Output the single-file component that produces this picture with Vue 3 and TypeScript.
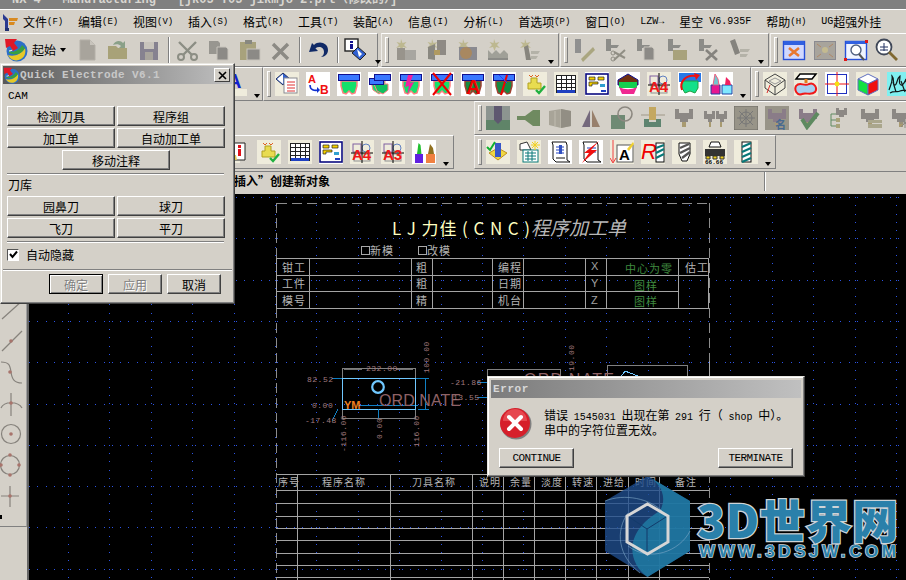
<template>
  <div class="app">
    <!-- 标题栏 -->
    <div class="titlebar">NX 4 - Manufacturing - [jk05 T05 jikmjo 2.prt（修改的）]</div>

    <!-- 菜单 -->
    <div class="menubar">
      <svg class="nx-logo" width="18" height="18" viewBox="0 0 18 18">
        <path d="M2 1l5 5v11H4V8L2 6z" fill="#2a3a90" />
        <path d="M8 5h9l-1 3H8zM8 9h6l-1 3H8z" fill="#d88a20" />
        <path d="M4 15h4v3H4z" fill="#203070" />
      </svg>
      <span v-for="m in menus" :key="m.label" class="menu-item"><i v-if="m.pre" class="menu-latin">{{ m.pre }}</i>{{ m.label }}<i v-if="m.key" class="menu-key">({{ m.key }})</i><i v-if="m.post" class="menu-latin">{{ m.post }}</i></span>
    </div>

    <!-- 工具条 -->
    <div v-for="(row, r) in rows" :key="r" class="tool-row">
      <div v-for="(group, g) in row" :key="g" class="tool-group" :class="group.cls">
        <template v-for="(item, i) in group.items" :key="i">
          <span v-if="item === 'grip'" class="grip"></span>
          <span v-else-if="item === 'sep'" class="sep"></span>
          <span v-else-if="item === 'more'" class="more"></span>
          <span v-else-if="item === 'startlabel'" class="start-label">起始<b class="start-caret"></b></span>
          <svg v-else class="tool-icon" :class="{ 'no-gap': item === 'start' }" width="24" height="24" viewBox="0 0 24 24" v-html="icons[item]"></svg>
        </template>
      </div>
    </div>

    <!-- 状态栏 -->
    <div class="statusbar">
      <div class="status-text">插入”创建新对象</div>
      <div class="status-right"></div>
    </div>

    <div class="work">
      <div class="palette">
        <div class="palette-icons">
          <svg v-for="(p, i) in paletteIcons" :key="i" width="26" height="31" viewBox="0 0 26 31" v-html="p"></svg>
          <span class="palette-mark"></span>
        </div>
      </div>

      <!-- 绘图区 -->
      <svg class="canvas" width="877" height="387" viewBox="29 193 877 387" shape-rendering="crispEdges">
        <path :d="gridDots" fill="#2c54e6" />

        <path class="frame" d="M277 202.5H710M276.5 202V580M709.5 202V580" />
        <path class="table" :d="topTable" />
        <path class="table" :d="bottomTable" />

        <g shape-rendering="auto">
          <text class="title-a" x="392" y="234" textLength="138">L J 力佳 ( C N C )</text>
          <text class="title-b" x="531" y="234">程序加工单</text>

          <text v-for="t in sheetTexts" :key="t.t + t.x + t.y" class="sheet" :class="t.c" :x="t.x" :y="t.y">{{ t.t }}</text>

          <rect x="361.5" y="245.5" width="8" height="8" fill="none" stroke="#a8a8a8" />
          <rect x="418.5" y="245.5" width="8" height="8" fill="none" stroke="#a8a8a8" />
        </g>

        <!-- 零件图 -->
        <path d="M342.5 367.5h73v50h-73z" fill="none" stroke="#808080" />
        <path d="M332 377.5h97M358 404.5h60" fill="none" stroke="#1080c4" />
        <path d="M342.5 377.5h73v31h-73zM342.5 408.5h73" fill="none" stroke="#70c8ff" />
        <path d="M378.5 408v9M418 408.5h11M425.5 378v30M338 408l-6 12" fill="none" stroke="#1080c4" />
        <path d="M344 368.5h18M396 368.5h17" stroke="#707070" fill="none" />
        <path d="M487.5 377v-9h73v9M607.5 377v-13h80v13" fill="none" stroke="#808080" />
        <path d="M477 381h10M477 396h10" stroke="#1080c4" fill="none" />
        <path d="M709.5 360v16" stroke="#a8a8a8" fill="none" />
        <path d="M620 377l5-7 18 7" stroke="#70c8ff" fill="none" />
        <g shape-rendering="auto">
          <circle cx="378" cy="386" r="5.8" fill="none" stroke="#70c8ff" stroke-width="2.2" />
          <text class="ord" x="379" y="405" textLength="82">ORD NATE</text>
          <text class="ord" x="524" y="384" textLength="90">ORD NATE</text>
          <text class="ym" x="344" y="408">YM</text>
          <text v-for="d in dims" :key="d.t + d.x" class="dim" :x="d.x" :y="d.y">{{ d.t }}</text>
          <text v-for="d in dimsV" :key="d.t + d.x" class="dim" :transform="`translate(${d.x} ${d.y}) rotate(-90)`">{{ d.t }}</text>
        </g>

        <!-- 水印 -->
        <g shape-rendering="auto">
          <polygon points="647.5,475 690,500 690,550 647.5,576 605,550 605,500" fill="#1f4d8d" fill-opacity=".8" />
          <path d="M647.5 475L690 500V550L647.5 576C626 560 625 530 660 510 668 495 660 482 647.5 475Z" fill="#1f7ea6" fill-opacity=".8" />
          <path d="M605 500C625 492 650 498 662 510M690 530C680 550 650 562 628 545M628 512C615 530 618 555 640 572" fill="none" stroke="#7fa8c8" stroke-opacity=".6" />
          <polygon points="647.5,503 668,515 668,541 647.5,553 627,541 627,515" fill="none" stroke="#d6d6d6" stroke-width="3" />
          <path d="M647 528v22M647 528l-18-12M647 528l19-12" stroke="#123a6a" fill="none" />
          <text class="wm-big" x="697" y="537" textLength="201">3D世界网</text>
          <text class="wm-small" x="699" y="556" textLength="197">WWW.3DSJW.COM</text>
        </g>
      </svg>
    </div>

    <!-- Quick Electrode 窗口 -->
    <section class="dialog qe">
      <header class="dlg-title qe-title">
        <svg width="17" height="17" viewBox="0 0 24 24" v-html="icons.start"></svg>
        <span class="qe-name">Quick Electrode V6.1</span>
        <button class="close" type="button">
          <svg width="9" height="9" viewBox="0 0 9 9"><path d="M1 1l7 7M8 1L1 8" stroke="#000" stroke-width="1.6" /></svg>
        </button>
      </header>
      <div class="qe-label">CAM</div>
      <div class="btn-grid">
        <button v-for="b in camButtons" :key="b" class="btn" type="button">{{ b }}</button>
        <button class="btn wide" type="button">移动注释</button>
      </div>
      <hr class="rule inset" />
      <div class="qe-label lib">刀库</div>
      <div class="btn-grid">
        <button v-for="b in toolButtons" :key="b" class="btn" type="button">{{ b }}</button>
      </div>
      <hr class="rule inset" />
      <label class="autohide">
        <span class="check">
          <svg width="9" height="9" viewBox="0 0 9 9"><path d="M1 4l2.5 3L8 1.5" fill="none" stroke="#000" stroke-width="2" /></svg>
        </span>
        自动隐藏
      </label>
      <hr class="rule" />
      <div class="dlg-actions">
        <button class="btn action default off" type="button">确定</button>
        <button class="btn action off" type="button">应用</button>
        <button class="btn action" type="button">取消</button>
      </div>
    </section>

    <!-- 错误窗口 -->
    <section class="dialog err">
      <header class="dlg-title err-title">Error</header>
      <div class="err-body">
        <svg class="err-icon" width="33" height="33" viewBox="0 0 33 33">
          <circle cx="17" cy="17" r="15.5" fill="#808080" />
          <circle cx="16" cy="16" r="15" fill="#d61f2a" />
          <path d="M4 14a12 12 0 0 1 24 0z" fill="#ec5a60" opacity=".7" />
          <path d="M10 10l12 12M22 10L10 22" stroke="#fff" stroke-width="4" stroke-linecap="round" />
        </svg>
        <p class="err-msg">错误 <i>1545031</i> 出现在第 <i>291</i> 行（ <i>shop</i> 中）。<br />串中的字符位置无效。</p>
      </div>
      <div class="err-actions">
        <button class="btn err-btn" type="button">CONTINUE</button>
        <button class="btn err-btn" type="button">TERMINATE</button>
      </div>
    </section>
  </div>
</template>

<script setup lang="ts">
interface Group {
  cls?: string
  items: string[]
}

interface Menu {
  label: string
  key?: string
  pre?: string
  post?: string
}

const menus: Menu[] = [
  { label: '文件', key: 'F' },
  { label: '编辑', key: 'E' },
  { label: '视图', key: 'V' },
  { label: '插入', key: 'S' },
  { label: '格式', key: 'R' },
  { label: '工具', key: 'T' },
  { label: '装配', key: 'A' },
  { label: '信息', key: 'I' },
  { label: '分析', key: 'L' },
  { label: '首选项', key: 'P' },
  { label: '窗口', key: 'O' },
  { label: '', pre: 'LZW→' },
  { label: '星空', post: ' V6.935F' },
  { label: '帮助', key: 'H' },
  { label: '超强外挂', pre: 'UG' }
]

const txt = (x: number, y: number, s: number, fill: string, t: string) =>
  `<text x="${x}" y="${y}" font-size="${s}" fill="${fill}" font-family="Liberation Sans" font-weight="bold">${t}</text>`
const white = '<rect width="24" height="24" fill="#fff"/>'
const beige = '<rect width="24" height="24" fill="#efecdc"/>'
const moldTop = '<rect x="1.5" y="2.5" width="21" height="6" fill="#3a78ff" stroke="#101090"/>'
const moldBody = '<path d="M4 9h16v5l-2 7-3 1-3-3-3 3-3-1-2-7z" fill="#14e06a" stroke="#ff8080" stroke-width="1.5"/>'
const moldDark = '<path d="M4 9h16v5l-2 7-3 1-3-3-3 3-3-1-2-7z" fill="#148a40" stroke="#a04030" stroke-width="1.5"/>'
const frameMark = '<rect x="3" y="4" width="8" height="8" fill="none" stroke="#8060a0"/><circle cx="16" cy="8" r="4" fill="none" stroke="#6080c0"/><rect x="4" y="14" width="16" height="7" fill="none" stroke="#909090"/><path d="M12 1v22M1 13h22" stroke="#000"/>'
const holder = (c: string) => `<path d="M3 3h4v4h10V3h4v10h-5v3H8v-3H3z" fill="${c}"/><path d="M10 16h4v5h-4z" fill="#a89a70"/>`
const spark = '<path d="M8 1l1.5 4 4-1-2.5 3 3 3-4-1-1.5 4-1.5-4-4 1 3-3-2.5-3 4 1z" fill="#bdb890"/>'
const table = `${beige}<rect x="2.5" y="3.5" width="19" height="17" fill="#fff" stroke="#222"/><path d="M2 7.5h20M2 11.5h20M2 15.5h20M7.5 3v15M12.5 3v15M17.5 3v15" stroke="#222"/><rect x="3" y="18" width="18" height="3" fill="#2040c0"/>`
const form = `${white}<rect x="1" y="2" width="22" height="20" fill="#fff" stroke="#0a0a80" stroke-width="1.6"/><path d="M4 5h6v3H4zM13 5h6v3h-6zM4 10h9v2H7v2H4z" fill="#f4d000" stroke="#222" stroke-width=".7"/><path d="M15 12h5v3h-5z" fill="#30a0d0"/><path d="M16 18h5v2h-5z" fill="#2040c0"/>`
const check = `${beige}<path d="M8 6h6v5h4v6H5v-6h3z" fill="#e8dc50" stroke="#b0a020"/><path d="M6 3l2 2 2-2M12 3l2 2 2-2" stroke="#e06020" fill="none"/><path d="M13 18l3 3 6-7" stroke="#20b040" stroke-width="2.4" fill="none"/>`
const a4 = (t: string) => `${beige}${frameMark}${txt(2, 20, 15, '#f01818', t)}`
const tools = `${white}<path d="M3 14h8v9H3z" fill="#6020e0"/><path d="M5 14l1.5-11 2 2 1 9z" fill="#20c030"/><path d="M14 14h9v9h-9z" fill="#f08040"/><path d="M16 14l2-10 3 4 1 6z" fill="#907020"/>`

const icons: Record<string, string> = {
  start: '<circle cx="13" cy="13" r="10.5" fill="#2d6fc8"/><path d="M4 17c5 2 13 0 17-7 1 4 0 9-4 11-5 3-11 1-13-4z" fill="#e6c828"/><path d="M5 13c4 2 10 0 13-6l3 3c-3 6-10 8-16 5z" fill="#38a040"/><path d="M11 8c-1 3-3 5-6 5" stroke="#fff" fill="none"/><path d="M1 1h12l-3 4 4 5-5 3-3-5-4 2z" fill="#e01828"/>',
  new: '<path d="M5 2h10l5 5v15H5z" fill="#a8a49c" stroke="#b4b0a8"/><path d="M15 2v5h5" fill="#c8c4bc"/>',
  open: '<path d="M2 8h8l2 2h9v11H2z" fill="#a8a278"/><path d="M7 7c2-5 8-5 10-2l2-2v7h-6l2-2c-2-2-5-2-8-1z" fill="#8aa088"/>',
  save: '<rect x="3" y="4" width="18" height="18" fill="#868290"/><rect x="7" y="4" width="10" height="7" fill="#c8c4bc"/><rect x="8" y="14" width="8" height="8" fill="#a8a49c"/>',
  cut: '<path d="M4 4l13 13M21 4L8 17" stroke="#8c8e84" stroke-width="2.4"/><circle cx="6" cy="19" r="3" fill="none" stroke="#8c8e84" stroke-width="2"/><circle cx="19" cy="19" r="3" fill="none" stroke="#8c8e84" stroke-width="2"/>',
  copy: '<path d="M3 3h9l2 2v11H3z" fill="#989690"/><path d="M11 9h9l2 2v11H11z" fill="#8c8a86" stroke="#c8c4bc"/>',
  paste: '<rect x="3" y="4" width="16" height="18" fill="#a8a27c"/><rect x="8" y="2" width="7" height="4" fill="#888880"/><rect x="10" y="11" width="13" height="11" fill="#8c8a86" stroke="#c8c4bc"/>',
  del: '<path d="M5 6l15 15M20 6L5 21" stroke="#8c8a84" stroke-width="3.4"/>',
  undo: '<path d="M6 5l-3 9 9-1-2.6-2.8C13 7.6 18 9 18 14c0 2-1 4-3 5 4 0 7-3 7-7 0-7-9-10-14-5z" fill="#102a66"/>',
  info: '<rect x="1" y="1" width="13" height="12" fill="#fff" stroke="#222" stroke-width="1.4"/><path d="M6 3h3v2H6zM6 6h3v5H6z" fill="#101090"/><path d="M14 9l8 7-6 6-8-7z" fill="#3060d0" stroke="#222"/><path d="M13 11l5 5-3 3z" fill="#fff"/>',
  cam1: `${spark}<rect x="4" y="10" width="8" height="12" fill="#98948c"/><rect x="12" y="12" width="11" height="10" fill="#a8a6a0"/>`,
  cam2: `${spark}<path d="M4 9l7-3v16l-7-1z" fill="#8a8880"/><rect x="13" y="2" width="9" height="15" fill="#8e8a84"/><rect x="10" y="12" width="6" height="5" fill="#b09a60"/>`,
  cam3: `${spark}<path d="M4 9h18v13H4z" fill="#8a8a90"/><circle cx="11" cy="15" r="6" fill="#a88860"/>`,
  cam4: `${spark}<path d="M2 12l4 4 4-4 4 4 4-4 4 4v6H2z" fill="#a0a098"/><path d="M2 21h20" stroke="#777"/>`,
  cam5: `${spark}<path d="M7 9l4-2 3 15H9z" fill="#87857e"/><path d="M14 13h9l-2 3h-7zM14 18h7l-2 3h-5z" fill="#b4b2a8"/>`,
  wr1: '<path d="M3 1h6v14H3z" fill="#909090"/><path d="M9 21l9-9 3-3 2 3-3 3-9 9z" fill="#aaa680"/>',
  wr0: '<path d="M3 1h5v12H3zM8 7h8l-2 3H8z" fill="#8c8c88"/><path d="M11 14l11 6M22 12L11 22" stroke="#908e84" stroke-width="2"/><circle cx="10" cy="15" r="2" fill="none" stroke="#908e84"/><circle cx="10" cy="21" r="2" fill="none" stroke="#908e84"/>',
  wr2: '<path d="M3 1h5v12H3zM8 7h8l-2 3H8z" fill="#8c8c88"/><path d="M10 9h8l2 2v11H10z" fill="#8c8a86" stroke="#c8c4bc"/>',
  wr3: '<path d="M3 1h5v12H3zM8 7h8l-2 3H8z" fill="#8c8c88"/><rect x="8" y="12" width="14" height="10" fill="#a8a27c"/>',
  wr4: '<path d="M3 1h5v12H3zM8 7h8l-2 3H8z" fill="#8c8c88"/><path d="M10 12l11 10M21 12L10 22" stroke="#85837e" stroke-width="2.6"/>',
  wr5: '<path d="M3 3l5-2 5 14-5 2z" fill="#85837e"/><path d="M13 11h10l-2 3h-8zM13 16h8l-2 3h-6z" fill="#b4b2a8"/>',
  view1: '<rect x="1.5" y="3.5" width="21" height="18" fill="#d0d8ff" stroke="#2850d8" stroke-width="1.4"/><rect x="2" y="3" width="20" height="4" fill="#3060e0"/><path d="M7 10l10 8M17 10L7 18" stroke="#e87830" stroke-width="2.6"/>',
  view2: '<rect x="1.5" y="3.5" width="21" height="18" fill="#a8a49c" stroke="#8a8a90"/><circle cx="12" cy="12" r="3" fill="#c4ba90"/><path d="M4 6l4 3M20 6l-4 3M4 19l4-3M20 19l-4-3" stroke="#b08868"/>',
  view3: '<rect x="1.5" y="3.5" width="21" height="18" fill="#f0f4ff" stroke="#2850d8" stroke-width="1.4"/><rect x="2" y="3" width="20" height="3" fill="#3060e0"/><circle cx="12" cy="12" r="5" fill="#fff" stroke="#506080" stroke-width="1.4"/><path d="M15 16l5 6" stroke="#555" stroke-width="2"/><path d="M0 20h3v3H0zM21 2h3v3h-3z" fill="#e01818"/>',
  view4: '<circle cx="9" cy="9" r="7.5" fill="#fff" stroke="#404858" stroke-width="1.8"/><path d="M5 9h8M9 5v8M5 12h8" stroke="#203060"/><path d="M14 14l8 8" stroke="#806830" stroke-width="2.8"/>',
  view5: '<path d="M6 2h6v14H6z" fill="#8c8c88"/><path d="M8 22l6-10 8 6" fill="none" stroke="#a09a90" stroke-width="3"/>',
  listinfo: `${beige}<path d="M8 1l7 6-7 6-7-6z" fill="#3060d0" stroke="#223060"/><path d="M2 7l6-5v10z" fill="#fff"/><rect x="9" y="6" width="13" height="15" fill="#fff" stroke="#8a8a90"/><path d="M12 10h8M12 13h8M12 16h8M12 19h8" stroke="#e03030"/>`,
  ab: `${white}${txt(2, 11, 11, '#f01010', 'A')}${txt(14, 22, 12, '#f01010', 'B')}<path d="M4 13c0 5 4 6 9 5" fill="none" stroke="#1030d0" stroke-width="1.6"/><path d="M11 15l3 3-3 3z" fill="#1030d0"/>`,
  m1: `${white}${moldBody}${moldTop}`,
  m2: `${white}<path d="M3 9h14v9l-6 4-6-4z" fill="#14e06a" stroke="#ff8080"/><path d="M6 12h14v6l-5 4-6-3z" fill="#10c060" stroke="#ff8080"/><rect x="1.5" y="6.5" width="14" height="6" fill="#3a78ff" stroke="#101090"/><rect x="6.5" y="2.5" width="16" height="6" fill="#3a78ff" stroke="#101090"/>`,
  m3: `${white}${moldBody}${moldTop}<path d="M14 3l-3 8 4-1-7 13 2-9-4 1 3-12z" fill="#f020a0"/>`,
  m4: `${white}${moldBody}${moldTop}<path d="M3 1l18 22M21 1L3 23" stroke="#f00000" stroke-width="2"/>`,
  m5: `${white}${moldDark}${moldTop}${txt(5, 22, 20, '#f00000', 'A')}`,
  m6: `${white}${moldDark}${moldTop}<path d="M15 3l-6 20" stroke="#f00000" stroke-width="2"/><path d="M7 3l8 8" stroke="#2040ff"/>`,
  check,
  table,
  form,
  a4: a4('A4'),
  a3: a4('A3'),
  tools,
  roof: `${white}<path d="M2 8l10-6 10 6v5H2z" fill="#703010" stroke="#101090"/><path d="M3 10h18v6H3z" fill="#14d050"/><path d="M3 15c6 3 12 3 18 0l-3 7H6z" fill="#f02890"/>`,
  swirl: `${white}<rect x="1" y="1" width="22" height="9" fill="#2878e8"/><path d="M4 9h16v7l-3 5-5-2-5 2-3-5z" fill="#14e08a" stroke="#20a040"/><path d="M4 18C1 10 8 2 18 4" fill="none" stroke="#f01010" stroke-width="2"/><path d="M16 1l6 2-4 5z" fill="#f01010"/>`,
  twin: `${white}<path d="M2 13h9v9H2z" fill="#e81890" stroke="#2040a0"/><path d="M4 13l2-11 3 5 1 6z" fill="#70c8d0" stroke="#f06080"/><path d="M13 13h10v9H13z" fill="#80e8ff" stroke="#2040a0"/><path d="M16 13l1-8 4 4 1 4z" fill="#f02060"/>`,
  box: `${beige}<path d="M12 2l10 6-10 7L2 8zM2 8v8l10 7 10-7V8M12 15v8" fill="none" stroke="#444"/><path d="M6 9l6 3 6-3-6-3z" fill="none" stroke="#999"/><path d="M4 21l3-8" stroke="#e03030"/>`,
  tray: `${beige}<path d="M6 2h16l-4 5H2z" fill="#fff" stroke="#000" stroke-width="1.5"/><path d="M12 7v4" stroke="#e08020" stroke-width="3"/><path d="M2 14c4-5 8 1 13-2 5-2 9 4 6 8-4 4-9 0-13 2-5 2-8-4-6-8z" fill="#a8d0f0" stroke="#f01818" stroke-width="2"/>`,
  cross: `${white}<rect x="2.5" y="2.5" width="19" height="19" fill="#fff" stroke="#2030c0"/><path d="M12 0v24M0 12h24" stroke="#f01010"/><circle cx="12" cy="12" r="2.4" fill="#f8e010"/>`,
  cube: `${beige}<path d="M2 7l10-5 10 5-10 5z" fill="#fff" stroke="#6070c0"/><path d="M2 7l10 5v11L2 18z" fill="#14e040" stroke="#6070c0"/><path d="M12 12l10-5v11l-10 5z" fill="#f01010" stroke="#6070c0"/>`,
  scrib: '<rect width="24" height="24" fill="#80f0f0"/><path d="M2 18c2-6 4-9 3-14 3 3 0 9 3 9 2 0 2-7 5-9 0 5-2 8 1 9 2 1 4-4 5-6 0 5 2 8 3 8M3 21c5-3 7 0 10-2s6 1 9-2M6 10l3 10M14 9l4 11" fill="none" stroke="#101818" stroke-width="1.2"/>',
  slab: '<rect width="24" height="24" fill="#8c9490"/><rect y="14" width="24" height="10" fill="#5f8468"/><path d="M8 0h8v14l-4 4-4-4z" fill="#5e5870"/>',
  nozzle: '<path d="M0 10h8l8-6h7v16h-7l-8-6H0z" fill="#6f8a60"/>',
  book: '<path d="M1 5l12-2 10 2v15l-10 2-12-3z" fill="#a8a498"/><path d="M13 3v19M7 5v15" stroke="#c0bcb0"/><path d="M13 3l10 2v15l-10 2z" fill="#928e84"/>',
  tri: '<path d="M11 4v17H3z" fill="#74687c"/><path d="M13 4v17h8z" fill="#98806c"/>',
  circ: '<rect x="1" y="9" width="14" height="14" fill="#6f8a74"/><circle cx="15" cy="8" r="7" fill="none" stroke="#8c8880" stroke-width="1.6"/>',
  block: '<path d="M0 9h24" stroke="#a09888"/><rect x="8" y="1" width="7" height="13" fill="#c4a860"/><path d="M3 13h5v3h7v-3h5v8H3z" fill="#5e8470"/>',
  h1: holder('#8c8884'),
  h2: '<path d="M1 5h3v3h5V5h3v8H9v3H5v-3H1zM13 5h3v3h5V5h3v8h-3v3h-4v-3h-4z" fill="#8c8884"/><path d="M6 16h2v5H6zM17 16h2v5h-2z" fill="#a89a70"/>',
  wheel: '<rect width="24" height="24" fill="#989488" stroke="#6c6a64"/><circle cx="12" cy="12" r="6" fill="none" stroke="#777"/><path d="M12 3v18M3 12h18M5 5l14 14M19 5L5 19" stroke="#777"/>',
  name: `<rect width="24" height="24" fill="#989488"/>${holder('#8a7c88')}<text x="10" y="23" font-size="11" fill="#4a6a90" font-family="Noto Sans CJK SC" font-weight="bold">名</text>`,
  hcheck: `${holder('#8a7c88')}<path d="M6 13l5 8 11-14" fill="none" stroke="#5e8a60" stroke-width="4"/>`,
  htree: '<path d="M9 2h3v2h5V2h3v7h-3v2h-5V9H9z" fill="#8c8884"/><path d="M4 8v12M4 8h5M4 14h5M4 20h5" stroke="#5e8a60"/><path d="M9 12h4v4H9zM9 18h4v4H9z" fill="#a8a278"/>',
  hstack: `${holder('#8c8884')}<path d="M10 14h14v3H10zM10 18h14v4H10z" fill="#aaa68c"/>`,
  hstar: `${holder('#8c8884')}<path d="M16 12v10M11 17h10M12 13l8 8M20 13l-8 8" stroke="#8a8a84"/>`,
  sheet1: '<rect x="0" y="3" width="14" height="20" fill="#efecdc"/><path d="M8 3h11v17H8z" fill="#fff" stroke="#222"/><path d="M12 5h3v3h-3zM12 9h3v7h-3z" fill="#e01018"/><path d="M2 15h8l1 5H2z" fill="#e0c850"/>',
  boxt: `${beige}<path d="M3 13l9-5 9 5-9 7z" fill="#f0d840" stroke="#c09020"/><path d="M9 3h6v14H9z" fill="#3858c8"/><path d="M1 7l3 3 5-8" fill="none" stroke="#10b030" stroke-width="2"/>`,
  spark2: `${beige}<path d="M3 4l7-2 4 8H3z" fill="#fff" stroke="#333"/><rect x="6" y="10" width="15" height="12" fill="#fff" stroke="#087878"/><path d="M8 13h11M8 16h11M8 19h11M11 11v10M15 11v10" stroke="#087878"/><path d="M18 1v9M14 5h9M15 2l6 6M21 2l-6 6" stroke="#f0d020"/>`,
  scroll: `${white}<path d="M4 2h14l1 3v15l3 2H8l-3-3V5z" fill="#fff" stroke="#111"/><path d="M8 7h8M8 10h8M8 13h8" stroke="#2040c0"/><rect x="11" y="5" width="3" height="9" fill="#3050c0"/><path d="M8 18h9" stroke="#111"/>`,
  scrollx: `${white}<path d="M4 2h14l1 3v15l3 2H8l-3-3V5z" fill="#fff" stroke="#111"/><path d="M8 8h9M8 12h9" stroke="#2040c0"/><path d="M20 1l-8 9h6L3 23l7-10H5z" fill="#f01010"/>`,
  penA: `${beige}<path d="M3 0v22M0 18l3 5 3-5" stroke="#f04040" fill="none"/><rect x="7" y="5" width="16" height="17" fill="#fff" stroke="#555"/>${txt(9, 20, 15, '#000', 'A')}<path d="M17 9l6-7 1 2-5 7z" fill="#f0d030"/>`,
  rdrill: `${beige}<text x="0" y="19" font-size="22" font-style="italic" fill="#f00000" font-family="Liberation Sans">R</text><rect x="15" y="3" width="8" height="19" fill="#fff" stroke="#111"/><path d="M15 8l8-3M15 13l8-4M15 18l8-4" stroke="#087878" stroke-width="2"/>`,
  drill: `${beige}<path d="M7 3h11v11l-3 7h-5l-3-7z" fill="#fff" stroke="#111"/><path d="M8 8l9-4M8 13l10-5M10 18l8-6" stroke="#555" stroke-width="2.4"/>`,
  mill: `${beige}<path d="M8 2h8l2 5H6z" fill="#fff" stroke="#111"/><path d="M2 9h20v7H2z" fill="#333"/><path d="M3 16h4v3H3zM10 16h4v3h-4zM17 16h4v3h-4z" fill="#f0d020" stroke="#333"/><text x="2" y="24" font-size="6" fill="#000" font-family="Liberation Mono" font-weight="bold">66.66</text>`,
  drill2: `${beige}<rect x="8" y="2" width="9" height="20" fill="#fff" stroke="#111"/><path d="M8 7l9-4M8 12l9-4M8 17l9-4M8 22l9-4" stroke="#087878" stroke-width="2.2"/>`,
  aBlue: `${txt(4, 16, 20, '#1020d0', 'A')}<rect y="17" width="24" height="7" fill="#efecdc"/>`
}

const rows: Group[][] = [
  [
    { cls: 'start-group', items: ['start', 'startlabel', 'new', 'open', 'save', 'sep', 'cut', 'copy', 'paste', 'del', 'sep', 'undo', 'sep', 'info', 'more'] },
    { cls: 'gap3', items: ['grip', 'cam1', 'cam2', 'cam3', 'cam4', 'cam5', 'more'] },
    { cls: 'gap1', items: ['grip', 'wr1', 'wr0', 'wr2', 'wr3', 'wr4', 'wr5', 'more'] },
    { cls: 'fill gap1', items: ['grip', 'view1', 'view2', 'view3', 'view4', 'view5'] }
  ],
  [
    { cls: 'w262', items: ['aBlue', 'more'] },
    { items: ['grip', 'listinfo', 'ab', 'm1', 'm2', 'm3', 'm4', 'm5', 'm6', 'check', 'table', 'form', 'roof', 'a4', 'swirl', 'twin', 'more'] },
    { cls: 'fill', items: ['grip', 'box', 'tray', 'cross', 'cube', 'scrib'] }
  ],
  [
    { cls: 'fill ml474', items: ['grip', 'slab', 'nozzle', 'book', 'tri', 'circ', 'block', 'h1', 'h2', 'wheel', 'name', 'hcheck', 'htree', 'hstack', 'hstar'] }
  ],
  [
    { cls: 'w454', items: ['sheet1', 'check', 'table', 'form', 'a4', 'a3', 'tools', 'more'] },
    { cls: 'ml20', items: ['grip', 'boxt', 'spark2', 'scroll', 'scrollx', 'penA', 'rdrill', 'drill', 'mill', 'drill2', 'more'] }
  ]
]

const camButtons = ['检测刀具', '程序组', '加工单', '自动加工单']
const toolButtons = ['园鼻刀', '球刀', '飞刀', '平刀']

const ink = 'fill="none" stroke="#86827c" stroke-width="1.2"'
const dot = (x: number, y: number) => `<circle cx="${x}" cy="${y}" r="1.8" fill="#a8746c"/>`
const paletteIcons = [
  '',
  '',
  '',
  `<path d="M2 24L22 6" ${ink}/>`,
  `<path d="M2 25L22 5" ${ink}/>${dot(11, 15)}`,
  `<path d="M1 5c8 0 9 3 10 10s3 11 11 11" ${ink}/>${dot(10, 15)}`,
  `<path d="M1 20C4 13 18 13 22 20M11 5v23" ${ink}/>${dot(11, 15)}`,
  `<circle cx="11" cy="15" r="9.5" ${ink}/>${dot(11, 15)}`,
  `<circle cx="10" cy="15" r="9.5" ${ink}/>${dot(10, 5)}${dot(1, 15)}${dot(19, 15)}${dot(10, 25)}`,
  `<path d="M1 15h18M10 5v21" ${ink}/>${dot(10, 15)}`
]

// 网格点：主线间距约 41.4，点距约 8.28
const buildDots = () => {
  let d = ''
  for (let j = 0; j < 10; j++) {
    const y = Math.round(196 + 41.3 * j)
    for (let x = 29; x < 906; x += 8.28) d += `M${Math.round(x)} ${y}h1v1h-1z`
  }
  for (let k = 0; k < 22; k++) {
    const x = Math.round(68 + 41.4 * k)
    for (let y = 196; y < 580; y += 8.26) d += `M${x} ${Math.round(y)}h1v1h-1z`
  }
  return d
}
const gridDots = buildDots()

const hLines = (ys: number[], x0: number, x1: number) => ys.map((y) => `M${x0} ${y}.5H${x1}`).join('')
const vLines = (xs: number[], y0: number, y1: number) => xs.map((x) => `M${x}.5 ${y0}V${y1}`).join('')

const topTable =
  hLines([257, 274, 307], 276, 709) +
  hLines([290], 276, 678) +
  vLines([276, 309, 411, 432, 492, 523, 585, 606, 678, 708], 257, 307)

const bottomTable =
  hLines([473, 489, 502, 515, 527, 539, 552, 564, 576], 276, 709) +
  vLines([297, 390, 472, 503, 534, 565, 596, 628, 659], 473, 580)

const sheetTexts = [
  { t: '新模', x: 370, y: 254, c: '' },
  { t: '改模', x: 427, y: 254, c: '' },
  { t: '钳工', x: 282, y: 271, c: '' },
  { t: '工件', x: 282, y: 287, c: '' },
  { t: '模号', x: 282, y: 304, c: '' },
  { t: '粗', x: 416, y: 271, c: 'tight' },
  { t: '粗', x: 416, y: 287, c: '' },
  { t: '精', x: 416, y: 304, c: '' },
  { t: '编程', x: 498, y: 271, c: '' },
  { t: '日期', x: 498, y: 287, c: '' },
  { t: '机台', x: 498, y: 304, c: '' },
  { t: 'X', x: 591, y: 269, c: 'thin' },
  { t: 'Y', x: 591, y: 286, c: 'thin' },
  { t: 'Z', x: 591, y: 303, c: 'thin' },
  { t: '中心为零', x: 625, y: 272, c: 'green' },
  { t: '图样', x: 634, y: 289, c: 'green' },
  { t: '图样', x: 634, y: 305, c: 'green' },
  { t: '估工', x: 685, y: 271, c: '' },
  { t: '序号', x: 278, y: 485, c: 'small' },
  { t: '程序名称', x: 322, y: 485, c: 'small' },
  { t: '刀具名称', x: 412, y: 485, c: 'small' },
  { t: '说明', x: 479, y: 485, c: 'small' },
  { t: '余量', x: 510, y: 485, c: 'small' },
  { t: '淡度', x: 541, y: 485, c: 'small' },
  { t: '转速', x: 572, y: 485, c: 'small' },
  { t: '进给', x: 603, y: 485, c: 'small' },
  { t: '时间', x: 635, y: 485, c: 'small' },
  { t: '备注', x: 675, y: 485, c: 'small' }
]

const dims = [
  { t: '82.52', x: 307, y: 381 },
  { t: '0.00', x: 312, y: 407 },
  { t: '-17.48', x: 305, y: 422 },
  { t: '232.00', x: 366, y: 370 },
  { t: '-21.86', x: 450, y: 384 },
  { t: '13.55', x: 453, y: 399 }
]

const dimsV = [
  { t: '-116.00', x: 346, y: 451 },
  { t: '0.00', x: 382, y: 438 },
  { t: '116.00', x: 419, y: 446 },
  { t: '100.00', x: 429, y: 372 },
  { t: '19.00', x: 574, y: 370 }
]
</script>

<style>
html,
body {
  margin: 0;
  background: #d4d0c8;
}
</style>

<style scoped>
.app {
  position: relative;
  width: 906px;
  height: 580px;
  overflow: hidden;
  background: #d4d0c8;
  font-family: "Noto Sans CJK SC", "Liberation Sans", sans-serif;
  font-size: 12px;
  color: #000;
}

.titlebar {
  height: 9px;
  padding-left: 12px;
  background: #808080;
  color: #d8d6d0;
  font-family: "Liberation Mono", "Noto Sans CJK SC", monospace;
  font-weight: bold;
  font-size: 12px;
  line-height: 1px;
  white-space: nowrap;
  overflow: hidden;
}

.menubar {
  display: flex;
  align-items: center;
  gap: 15px;
  height: 24px;
  padding-left: 23px;
  position: relative;
  border-top: 1px solid #fff;
  box-sizing: border-box;
  white-space: nowrap;
}

.nx-logo {
  position: absolute;
  left: 1px;
  top: 3px;
}

.menu-item {
  display: inline-flex;
  align-items: center;
  line-height: 14px;
  white-space: pre;
}

.menu-key {
  display: inline-block;
  width: 16px;
  font: normal 9px "Liberation Mono", monospace;
}

.menu-latin {
  font: normal 10px "Liberation Mono", "Noto Sans CJK SC", monospace;
}

.tool-row {
  display: flex;
  height: 34px;
  box-sizing: border-box;
}

.tool-group {
  display: flex;
  align-items: center;
  box-sizing: border-box;
  height: 34px;
  padding: 0 3px 0 4px;
  border-top: 1px solid #fff;
  border-left: 1px solid #efedea;
  border-right: 1px solid #808080;
  border-bottom: 1px solid #808080;
  flex: none;
}

.tool-group.start-group {
  padding-left: 5px;
  width: 378px;
  border-left: 0;
}

.gap3 {
  margin-left: 3px;
}

.gap1 {
  margin-left: 1px;
}

.ml474 {
  margin-left: 474px;
}

.ml20 {
  margin-left: 20px;
}

.fill {
  flex: 1;
  overflow: hidden;
  border-right: 0;
}

.w262 {
  width: 263px;
  justify-content: flex-end;
  padding-right: 1px;
}

.w454 {
  width: 454px;
  justify-content: flex-end;
}

.tool-icon {
  flex: none;
  margin-right: 7px;
}

.tool-icon.no-gap {
  margin-right: 4px;
  margin-left: -1px;
}

.start-label {
  display: inline-flex;
  flex: none;
  align-items: center;
  width: 36px;
  line-height: 14px;
  margin-right: 7px;
  font-size: 12px;
  white-space: nowrap;
}

.start-caret {
  margin-left: 4px;
  border: 3px solid transparent;
  border-top: 4px solid #000;
  border-bottom: 0;
}

.grip {
  flex: none;
  width: 2px;
  height: 24px;
  margin-right: 4px;
  border: 1px solid;
  border-color: #fff #808080 #808080 #fff;
  margin-left: -1px;
}

.sep {
  flex: none;
  width: 0;
  height: 26px;
  margin-right: 5px;
  border-left: 1px solid #808080;
  border-right: 1px solid #fff;
}

.more {
  flex: none;
  width: 7px;
  height: 5px;
  position: relative;
}

.more::after {
  content: "";
  position: absolute;
  left: 0;
  top: 12px;
  border: 3px solid transparent;
  border-top: 4px solid #000;
  border-bottom: 0;
}

.statusbar {
  display: flex;
  height: 20px;
  margin-top: 2px;
  border-top: 1px solid #808080;
  box-sizing: border-box;
}

.status-text {
  width: 765px;
  box-sizing: border-box;
  padding-left: 234px;
  font-weight: bold;
  line-height: 17px;
  border-right: 1px solid #808080;
}

.status-right {
  flex: 1;
  border-left: 1px solid #fff;
}

.work {
  display: flex;
  height: 387px;
  margin-top: 3px;
  border-top: 1px solid #fff;
  box-sizing: content-box;
}

.palette {
  flex: none;
  width: 29px;
  box-sizing: border-box;
  border-right: 2px solid #666;
  overflow: hidden;
}

.palette-icons {
  position: relative;
  display: flex;
  flex-direction: column;
  height: 332px;
  padding-top: 7px;
  box-sizing: border-box;
  border-bottom: 1px solid #808080;
  border-right: 1px solid #a0a0a0;
}

.palette-icons svg {
  flex: none;
}

.palette-mark {
  position: absolute;
  left: 0;
  bottom: 7px;
  width: 2px;
  height: 4px;
  background: #000;
}

.canvas {
  display: block;
  flex: none;
  margin-top: -1px;
  background: #000;
}

.frame {
  fill: none;
  stroke: #8c8c8c;
  stroke-dasharray: 10 5;
}

.table {
  fill: none;
  stroke: #a4a4a4;
}

.title-a {
  fill: #ffffc0;
  font: 17px "Noto Sans CJK SC", sans-serif;
}

.title-b {
  fill: #b8b8b8;
  font: italic 19px "Noto Sans CJK SC", sans-serif;
}

.sheet {
  fill: #b4b4b4;
  font: 11px "Noto Sans CJK SC", sans-serif;
  letter-spacing: 1px;
}

.sheet.small {
  font-size: 10px;
}

.sheet.thin {
  font-size: 11px;
  font-family: "Liberation Sans", sans-serif;
  fill: #a0a0a0;
}

.sheet.green {
  fill: #3f8a3f;
}

.sheet.tight {
  letter-spacing: 0;
}

.ord {
  fill: #8f6266;
  font: 16px "Liberation Sans", sans-serif;
}

.ym {
  fill: #f08020;
  font: bold 11px "Liberation Sans", sans-serif;
}

.dim {
  fill: #a07a7e;
  font: 8px "Liberation Mono", monospace;
  letter-spacing: .5px;
}

.wm-big {
  fill: #2a80aa;
  stroke: #cdd4d8;
  stroke-width: 2.5px;
  paint-order: stroke;
  font: 900 46px "Noto Sans CJK SC", sans-serif;
}

.wm-small {
  fill: #2a80aa;
  stroke: #cdd4d8;
  stroke-width: 1.6px;
  paint-order: stroke;
  font: 900 17px "Liberation Sans", sans-serif;
}

.dialog {
  position: absolute;
  box-sizing: border-box;
  background: #d4d0c8;
  border: 1px solid;
  border-color: #e8e6e0 #404040 #404040 #e8e6e0;
  box-shadow: inset -1px -1px #808080, inset 1px 1px #fff;
}

.qe {
  left: 0;
  top: 63px;
  width: 235px;
  height: 241px;
  padding: 2px 2px 0;
}

.dlg-title {
  display: flex;
  align-items: center;
  height: 18px;
  background: linear-gradient(90deg, #585858, #c0c0c0);
}

.qe-title {
  padding: 0 2px 0 0;
}

.qe-name {
  flex: 1;
  color: #c8c8c8;
  font: bold 11px "Liberation Mono", monospace;
  letter-spacing: .4px;
  white-space: nowrap;
}

.close {
  display: flex;
  align-items: center;
  justify-content: center;
  width: 16px;
  height: 14px;
  padding: 0;
  background: #d4d0c8;
  border: 1px solid;
  border-color: #fff #404040 #404040 #fff;
}

.qe-label {
  height: 22px;
  padding-left: 5px;
  font-family: "Liberation Mono", monospace;
  font-size: 11px;
  line-height: 24px;
}

.qe-label.lib {
  height: 21px;
  font-family: "Noto Sans CJK SC", sans-serif;
  font-size: 12px;
  line-height: 20px;
}

.btn-grid {
  display: grid;
  grid-template-columns: 108px 108px;
  grid-auto-rows: 20px;
  gap: 2px;
  padding-left: 4px;
}

.btn {
  padding: 0;
  box-sizing: border-box;
  background: #d4d0c8;
  color: #000;
  font: 12px "Noto Sans CJK SC", sans-serif;
  border: 1px solid;
  border-color: #fff #404040 #404040 #fff;
  box-shadow: inset -1px -1px #808080;
  white-space: nowrap;
}

.btn.wide {
  grid-column: 1 / span 2;
  justify-self: center;
  width: 108px;
}

.rule {
  margin: 3px 0 0;
  height: 0;
  border: 0;
  border-top: 1px solid #808080;
  border-bottom: 1px solid #fff;
}

.rule.inset {
  margin: 3px 8px 0 4px;
}

.autohide {
  display: flex;
  align-items: center;
  gap: 7px;
  height: 23px;
  padding-left: 4px;
  line-height: 14px;
}

.check {
  display: flex;
  align-items: center;
  justify-content: center;
  width: 12px;
  height: 12px;
  box-sizing: border-box;
  background: #fff;
  border: 1px solid;
  border-color: #555 #fff #fff #555;
}

.dlg-actions {
  display: flex;
  gap: 5px;
  padding: 3px 0 0 46px;
}

.btn.action {
  width: 54px;
  height: 20px;
}

.btn.default {
  border: 1px solid #000;
  box-shadow: inset 1px 1px #fff, inset -1px -1px #808080;
}

.btn.off {
  color: #808080;
  text-shadow: 1px 1px #fff;
}

.err {
  left: 487px;
  top: 376px;
  width: 318px;
  height: 101px;
  padding: 3px;
}

.err-title {
  padding-left: 2px;
  background: linear-gradient(90deg, #7c7c7c, #c0c0c0);
  color: #d8d8d8;
  font: bold 11px "Liberation Mono", monospace;
  letter-spacing: .6px;
}

.err-body {
  display: flex;
  height: 50px;
  padding: 10px 0 0 8px;
  box-sizing: border-box;
}

.err-icon {
  flex: none;
  margin-top: -1px;
}

.err-msg {
  margin: 0 0 0 12px;
  font-size: 12px;
  line-height: 13px;
  word-spacing: 3px;
  white-space: nowrap;
}

.err-msg i {
  font: normal 10px "Liberation Mono", monospace;
}

.err-actions {
  display: flex;
  justify-content: space-between;
  padding: 0 8px 0 8px;
}

.btn.err-btn {
  width: 75px;
  height: 20px;
  font: 11px "Liberation Mono", monospace;
  letter-spacing: -.6px;
}
</style>
